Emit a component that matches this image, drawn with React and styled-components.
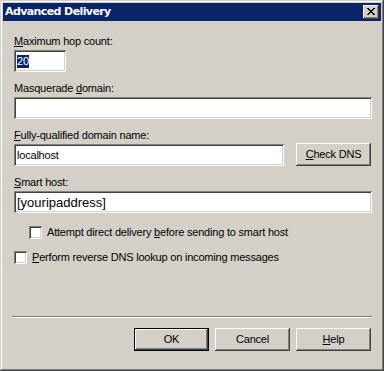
import React from 'react';
import styled, { createGlobalStyle } from 'styled-components';

const Global = createGlobalStyle`
  html, body { margin: 0; padding: 0; background: #d4d0c8; }
  body { font-family: "Liberation Sans", Arial, sans-serif; font-size: 11px; color: #000; letter-spacing: -0.2px; }
  * { box-sizing: border-box; }
`;

const raised = `
  box-shadow: inset -1px -1px #404040, inset 1px 1px #ffffff, inset -2px -2px #808080, inset 2px 2px #d4d0c8;
`;
const sunken = `
  box-shadow: inset 1px 1px #808080, inset -1px -1px #ffffff, inset 2px 2px #404040, inset -2px -2px #d4d0c8;
`;

const Window = styled.div`
  width: 384px;
  height: 371px;
  padding: 3px;
  background: #d4d0c8;
  box-shadow: inset -1px -1px #404040, inset 1px 1px #d4d0c8, inset -2px -2px #808080, inset 2px 2px #ffffff;
  display: flex;
  flex-direction: column;
`;

const TitleBar = styled.div`
  height: 18px;
  background: #0a246a;
  display: flex;
  align-items: center;
  justify-content: space-between;
  padding: 0 2px 0 2px;
`;

const Title = styled.span`
  color: #fff;
  font-family: "DejaVu Sans", Verdana, sans-serif;
  font-weight: bold;
  font-size: 11px;
  letter-spacing: -0.6px;
  line-height: 12px;
  white-space: nowrap;
`;

const CloseButton = styled.div`
  width: 16px;
  height: 14px;
  background: #d4d0c8;
  ${raised}
  display: flex;
  align-items: flex-start;
  justify-content: flex-start;
  padding: 3px 0 0 4px;
`;

const Body = styled.div`
  flex: 1;
  display: flex;
  flex-direction: column;
  padding: 14px 9px 17px 11px;
`;

const Fields = styled.div`
  display: flex;
  flex-direction: column;
  gap: 10px;
`;

const Field = styled.div`
  display: flex;
  flex-direction: column;
  gap: 2px;
`;

const Label = styled.div`
  line-height: 13px;
  height: 13px;
  white-space: nowrap;
`;

const TextBox = styled.div`
  height: 22px;
  width: ${p => (p.$width ? `${p.$width}px` : 'auto')};
  flex: ${p => (p.$grow ? 1 : 'none')};
  background: #fff;
  ${sunken}
  display: flex;
  align-items: center;
  padding: 0 2px 0 3px;
  font-size: ${p => (p.$large ? '13px' : '11px')};
  letter-spacing: ${p => (p.$large ? '0' : '-0.2px')};
  line-height: ${p => (p.$large ? '15px' : '13px')};
  white-space: nowrap;
  overflow: hidden;
`;

const Selected = styled.span`
  background: #0a246a;
  color: #fff;
  line-height: 13px;
`;

const Row = styled.div`
  display: flex;
  align-items: flex-start;
  gap: 12px;
`;

const Button = styled.div`
  width: 75px;
  height: 23px;
  flex: none;
  background: #d4d0c8;
  ${p =>
    p.$default
      ? `box-shadow: inset 0 0 0 1px #000000, inset -2px -2px #404040, inset 2px 2px #ffffff, inset -3px -3px #808080;`
      : raised}
  display: flex;
  align-items: center;
  justify-content: center;
  line-height: 13px;
  margin-top: ${p => (p.$raiseBy ? `-${p.$raiseBy}px` : '0')};
  margin-right: ${p => (p.$inset ? '1px' : '0')};
`;

const Checks = styled.div`
  display: flex;
  flex-direction: column;
  gap: 12px;
  margin-top: 13px;
`;

const CheckRow = styled.div`
  display: flex;
  align-items: center;
  gap: 5px;
  height: 13px;
  padding-left: ${p => p.$indent || 0}px;
  line-height: 13px;
  white-space: nowrap;
`;

const Box = styled.div`
  width: 13px;
  height: 13px;
  flex: none;
  background: #fff;
  ${sunken}
`;

const Footer = styled.div`
  margin-top: auto;
  display: flex;
  flex-direction: column;
`;

const Separator = styled.div`
  height: 2px;
  border-top: 1px solid #808080;
  border-bottom: 1px solid #ffffff;
  margin: 0 0 10px -2px;
`;

const ButtonRow = styled.div`
  display: flex;
  justify-content: flex-end;
  gap: 6px;
  padding-right: 1px;
`;

const closeGlyph = [
  [0, 0], [1, 0], [6, 0], [7, 0],
  [1, 1], [2, 1], [5, 1], [6, 1],
  [2, 2], [3, 2], [4, 2], [5, 2],
  [3, 3], [4, 3],
  [2, 4], [3, 4], [4, 4], [5, 4],
  [1, 5], [2, 5], [5, 5], [6, 5],
  [0, 6], [1, 6], [6, 6], [7, 6],
];

const CloseGlyph = () => (
  <svg width="8" height="7" viewBox="0 0 8 7" shapeRendering="crispEdges">
    {closeGlyph.map(([x, y]) => (
      <rect key={`${x}-${y}`} x={x} y={y} width="1" height="1" fill="#000" />
    ))}
  </svg>
);

export default function App() {
  return (
    <>
      <Global />
      <Window>
        <TitleBar>
          <Title>Advanced Delivery</Title>
          <CloseButton>
            <CloseGlyph />
          </CloseButton>
        </TitleBar>
        <Body>
          <Fields>
            <Field>
              <Label><u>M</u>aximum hop count:</Label>
              <TextBox $width={52}><Selected>20</Selected></TextBox>
            </Field>
            <Field>
              <Label>Masquerade <u>d</u>omain:</Label>
              <TextBox />
            </Field>
            <Field>
              <Label><u>F</u>ully-qualified domain name:</Label>
              <Row>
                <TextBox $grow>localhost</TextBox>
                <Button $raiseBy={1} $inset><span><u>C</u>heck DNS</span></Button>
              </Row>
            </Field>
            <Field>
              <Label><u>S</u>mart host:</Label>
              <TextBox $large>[youripaddress]</TextBox>
            </Field>
          </Fields>
          <Checks>
            <CheckRow $indent={15}>
              <Box />
              <span>Attempt direct delivery <u>b</u>efore sending to smart host</span>
            </CheckRow>
            <CheckRow>
              <Box />
              <span><u>P</u>erform reverse DNS lookup on incoming messages</span>
            </CheckRow>
          </Checks>
          <Footer>
            <Separator />
            <ButtonRow>
              <Button $default>OK</Button>
              <Button>Cancel</Button>
              <Button><span><u>H</u>elp</span></Button>
            </ButtonRow>
          </Footer>
        </Body>
      </Window>
    </>
  );
}
